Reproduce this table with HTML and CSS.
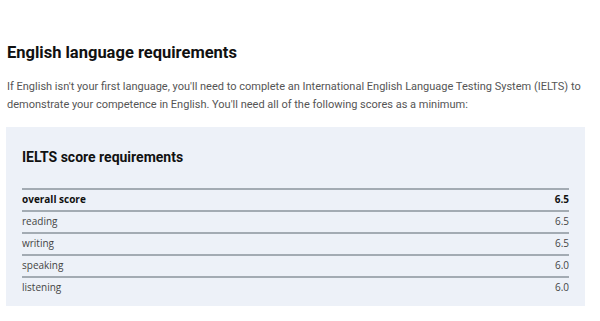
FILE: index.html
```html
<!DOCTYPE html>
<html>
<head>
<meta charset="utf-8">
<link rel="stylesheet" href="styles.css">
</head>
<body>
<div class="page">
  <h1 class="title">English language requirements</h1>
  <p class="intro">If English isn't your first language, you'll need to complete an International English Language Testing System (IELTS) to demonstrate your competence in English. You'll need all of the following scores as a minimum:</p>
  <section class="box">
    <h2 class="box-title">IELTS score requirements</h2>
    <div class="table">
      <div class="row strong"><span>overall score</span><span>6.5</span></div>
      <div class="row"><span>reading</span><span>6.5</span></div>
      <div class="row"><span>writing</span><span>6.5</span></div>
      <div class="row"><span>speaking</span><span>6.0</span></div>
      <div class="row"><span>listening</span><span>6.0</span></div>
    </div>
  </section>
</div>
</body>
</html>
```
FILE: styles.css
```css
* { box-sizing: border-box; }
html, body { margin: 0; padding: 0; background: #fff; }
body { font-family: Roboto, "Liberation Sans", sans-serif; color: #111; }
.page { padding: 41px 15px 0 6px; }
.title {
  margin: 0 0 13px 1px;
  font-size: 16.5px;
  line-height: 24px;
  font-weight: 700;
  color: #111;
}
.intro {
  margin: 0 -6px 14px 1px;
  font-size: 11px;
  line-height: 17.5px;
  color: #555;
}
.box {
  background: #edf1f8;
  padding: 20px 16px 8px 16px;
}
.box-title {
  margin: 0 0 21px 0;
  font-size: 14px;
  line-height: 20px;
  font-weight: 700;
  color: #111;
}
.row {
  display: flex;
  justify-content: space-between;
  align-items: center;
  height: 22px;
  border-top: 2px solid #a3abb3;
  font-family: "Open Sans", Roboto, sans-serif;
  font-size: 10px;
  color: #444;
  padding-bottom: 2px;
}
.row.strong { font-weight: 700; color: #111; }
```
